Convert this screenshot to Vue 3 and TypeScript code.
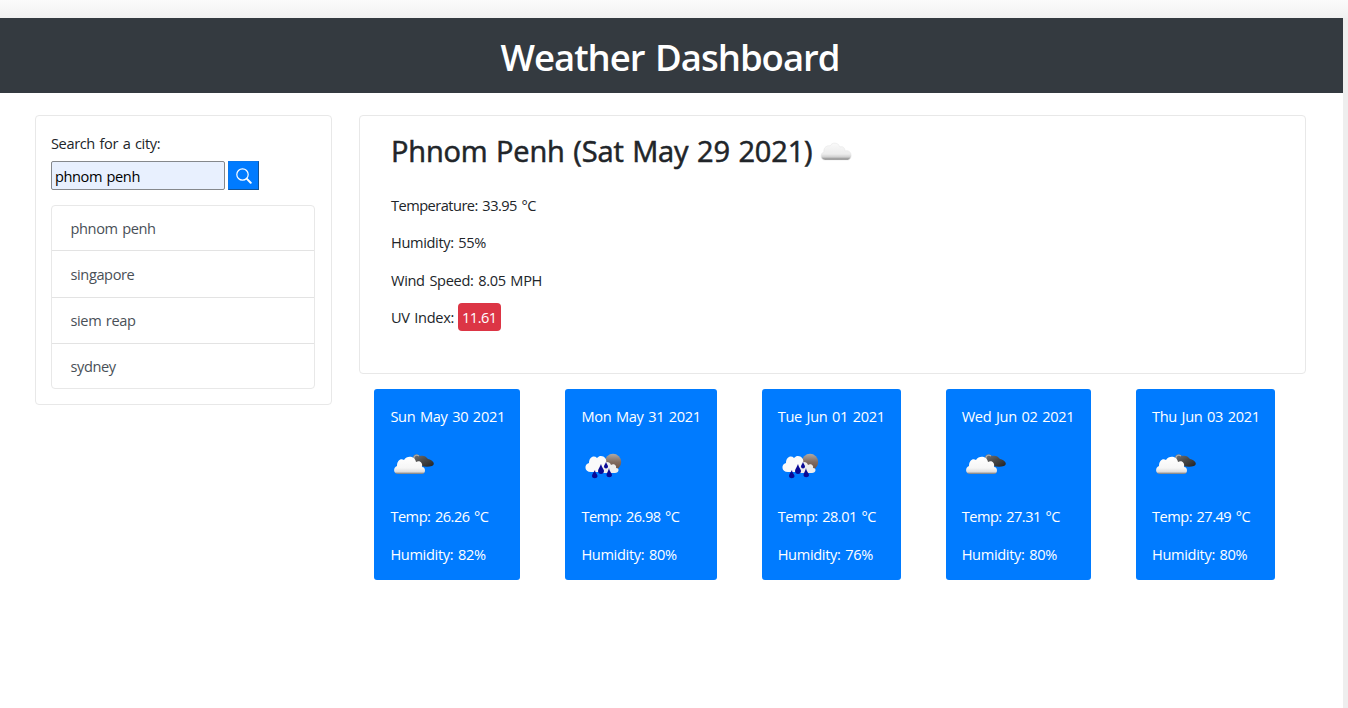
<script setup lang="ts">
interface Forecast {
  date: string
  icon: 'clouds' | 'rain'
  temp: string
  humidity: string
  size: string
}

const cities: string[] = ['phnom penh', 'singapore', 'siem reap', 'sydney']

const details: string[] = ['Temperature: 33.95 °C', 'Humidity: 55%', 'Wind Speed: 8.05 MPH']

const forecasts: Forecast[] = [
  { date: 'Sun May 30 2021', icon: 'clouds', temp: '26.26', humidity: '82', size: 'sun' },
  { date: 'Mon May 31 2021', icon: 'rain', temp: '26.98', humidity: '80', size: 'mon' },
  { date: 'Tue Jun 01 2021', icon: 'rain', temp: '28.01', humidity: '76', size: 'tue' },
  { date: 'Wed Jun 02 2021', icon: 'clouds', temp: '27.31', humidity: '80', size: 'wed' },
  { date: 'Thu Jun 03 2021', icon: 'clouds', temp: '27.49', humidity: '80', size: 'thu' },
]
</script>

<template>
  <div class="page">
    <div class="topbar"></div>
    <div class="view">
      <header class="header"><h1>Weather Dashboard</h1></header>
      <main class="main">
        <aside class="panel search">
          <label class="label" for="city">Search for a city:</label>
          <div class="form">
            <input id="city" class="input" type="text" value="phnom penh" />
            <button class="button" type="button" aria-label="Search">
              <svg width="16" height="16" viewBox="0 0 16 16" fill="none" stroke="#fff" stroke-linecap="round">
                <circle cx="6.5" cy="6.5" r="5.7" stroke-width="1.2" />
                <path d="M10.9 10.9L14.7 14.7" stroke-width="2" />
              </svg>
            </button>
          </div>
          <ul class="list">
            <li v-for="city in cities" :key="city">{{ city }}</li>
          </ul>
        </aside>
        <section class="content">
          <div class="panel current">
            <h2>
              <span>Phnom Penh (Sat May 29 2021)</span>
              <svg class="cloud" width="32" height="20" viewBox="0 0 32 20">
                <defs>
                  <linearGradient id="pale" x1="0" y1="0" x2="0" y2="1">
                    <stop offset="0" stop-color="#fafafa" />
                    <stop offset=".65" stop-color="#ececec" />
                    <stop offset=".82" stop-color="#d0d0d0" />
                    <stop offset="1" stop-color="#777" />
                  </linearGradient>
                </defs>
                <path d="M5 18C0 18 0 11 4 10C3 5 8 3 10 4C12 0 18 0 20 5C23 4 25 6 25 9C32 7 33 17 28 18Z" fill="url(#pale)" stroke="#e6e6e6" stroke-width=".6" />
              </svg>
            </h2>
            <p v-for="line in details" :key="line">{{ line }}</p>
            <p class="uv">UV Index: <span class="badge">11.61</span></p>
          </div>
          <div class="forecast">
            <article v-for="day in forecasts" :key="day.date" class="card" :class="day.size">
              <p class="date">{{ day.date }}</p>
              <svg class="icon" width="47" height="47" viewBox="0 0 47 47">
                <defs>
                  <linearGradient :id="`white-${day.size}`" x1="0" y1="0" x2="0" y2="1">
                    <stop offset="0" stop-color="#fff" />
                    <stop offset=".65" stop-color="#f6f6f6" />
                    <stop offset=".87" stop-color="#ddd" />
                    <stop offset="1" stop-color="#777" />
                  </linearGradient>
                  <linearGradient :id="`dark-${day.size}`" x1="0" y1="0" x2="1" y2="1">
                    <stop offset="0" stop-color="#777" />
                    <stop offset=".5" stop-color="#484848" />
                    <stop offset="1" stop-color="#222" />
                  </linearGradient>
                  <linearGradient :id="`moon-${day.size}`" x1="0" y1="0" x2="0" y2="1">
                    <stop offset="0" stop-color="#b0aaa5" />
                    <stop offset=".5" stop-color="#806b60" />
                    <stop offset="1" stop-color="#685045" />
                  </linearGradient>
                </defs>
                <template v-if="day.icon === 'clouds'">
                  <path d="M23 19C22 14 26 12 30 15C33 14 36 15 38 18C43 19 46 23 42 25C36 27 29 25 25 21Z" :fill="`url(#dark-${day.size})`" />
                  <path d="M24 19C23 15 26 13 29 15" fill="none" stroke="#aaa" stroke-width="1.2" />
                  <path d="M8 33C3 33 3 26 7 25C7 19 11 17 14 19C17 14 25 15 26 21C30 19 33 22 32 26C36 26 36 33 32 33Z" :fill="`url(#white-${day.size})`" />
                </template>
                <template v-else>
                  <circle cx="32" cy="21" r="8.2" :fill="`url(#moon-${day.size})`" />
                  <path d="M10 31C3 31 3 23 8 22C8 16 13 14 16 17C20 12 27 17 25 22C29 22 29 31 23 31Z" fill="#fafafa" />
                  <path d="M22 32C18 30 20 25 23 25C22 20 29 20 30 24C33 22 36 25 35 27C39 27 38 32 34 32Z" fill="#eee" />
                  <g fill="#0a0a96">
                    <path d="M20 23C21 27 23 28 23 30C23 34 17 34 17 30C17 28 19 26 20 23Z" />
                    <path d="M14 29C14 32 16.5 33 16.5 35C16.5 38 11 38 11 35C11 33 13 31 14 29Z" />
                    <path d="M28 27C28 30 31 32 31 34C31 37 25.5 37 25.5 34C25.5 32 27.5 30 28 27Z" />
                    <path d="M25 21C25.5 23 27 24 27 25.5C27 28 23 28 23 25.5C23 24 24.5 23 25 21Z" />
                  </g>
                </template>
              </svg>
              <p>Temp: {{ day.temp }} °C</p>
              <p>Humidity: {{ day.humidity }}%</p>
            </article>
          </div>
        </section>
      </main>
    </div>
  </div>
</template>

<style>
body {
  margin: 0;
  overflow: hidden;
}
</style>

<style scoped>
.page {
  box-sizing: border-box;
  width: 1348px;
  height: 708px;
  overflow: hidden;
  background: #eee;
  color: #212529;
  font: 14.6px/22.5px "Segoe UI", "Open Sans", "Noto Sans", sans-serif;
  letter-spacing: -0.33px;
  word-spacing: 1.2px;
}
.page * {
  box-sizing: border-box;
}
p, h1, h2, ul {
  margin: 0;
}
.topbar {
  height: 18px;
  background: linear-gradient(#fbfbfb, #f1f1f1);
}
.view {
  width: 1343px;
  height: 690px;
  background: #fff;
}
.header {
  height: 75px;
  padding-top: 16px;
  background: #343a40;
  color: #fff;
  text-align: center;
}
h1 {
  padding-right: 3px;
  font-size: 36.5px;
  font-weight: 600;
  line-height: 46px;
  letter-spacing: -1px;
  word-spacing: 2px;
}
.main {
  display: flex;
  align-items: flex-start;
  gap: 27px;
  padding: 22px 0 0 35px;
}
.panel {
  border: 1px solid #e8e8e8;
  border-radius: 4px;
}
.search {
  width: 297px;
  height: 290px;
  padding: 16px 16px 0 15px;
}
.label {
  display: block;
  height: 29px;
  letter-spacing: -0.38px;
}
.form {
  display: flex;
  gap: 3px;
  height: 29px;
}
.input {
  width: 174px;
  height: 29px;
  padding: 1px 3px 0;
  border: 1px solid #85888c;
  border-radius: 2px;
  background: #e8f0fe;
  color: #000;
  font: inherit;
  letter-spacing: -0.42px;
  word-spacing: inherit;
}
.button {
  display: flex;
  align-items: center;
  justify-content: center;
  width: 31px;
  height: 29px;
  padding: 1px 0 0;
  border: 1px solid;
  border-color: #0877ed #125499 #125499 #0877ed;
  background: #007bff;
}
.list {
  height: 184px;
  margin-top: 15px;
  padding: 0;
  border: 1px solid #e8e8e8;
  border-radius: 4px;
  color: #495057;
  letter-spacing: -0.4px;
  list-style: none;
}
li {
  height: 46px;
  padding: 11px 18.5px 0;
  border-bottom: 1px solid #e3e3e3;
}
li:first-child {
  height: 45px;
}
li:nth-child(2) {
  height: 47px;
  padding-top: 12px;
}
li:last-child {
  height: 44px;
  border-bottom: 0;
}
.content {
  width: 947px;
}
.current {
  height: 259px;
  padding: 16px 31px 0;
}
h2 {
  display: flex;
  align-items: center;
  gap: 8px;
  height: 38px;
  margin-bottom: 24px;
  font-size: 29px;
  font-weight: 400;
  letter-spacing: -0.16px;
  line-height: 38px;
  white-space: nowrap;
  -webkit-text-stroke: 0.55px #212529;
}
.cloud {
  margin-top: 1px;
}
.current p {
  height: 22.5px;
  margin-bottom: 15px;
}
.current p:nth-of-type(1) {
  margin-bottom: 14.4px;
  letter-spacing: -0.52px;
}
.current p:nth-of-type(2) {
  margin-bottom: 15.6px;
  letter-spacing: -0.35px;
}
.current p:nth-of-type(3) {
  margin-bottom: 14.4px;
}
.uv {
  display: flex;
  gap: 4px;
}
.badge {
  height: 28px;
  margin-top: -3px;
  padding: 3px 4px 0;
  border-radius: 4px;
  background: #dc3545;
  color: #fff;
  letter-spacing: -0.5px;
}
.forecast {
  display: flex;
  gap: 45px;
  margin-top: 15px;
  padding-left: 15.4px;
}
.card {
  flex: none;
  height: 191px;
  padding: 16px 0 0 16px;
  border-radius: 3px;
  background: #007bff;
  color: #fff;
  white-space: nowrap;
}
.card p {
  height: 22.5px;
  margin-bottom: 15px;
}
.card .date {
  margin-bottom: 13px;
}
.card .icon + p {
  margin-bottom: 16px;
  letter-spacing: -0.5px;
}
.icon {
  display: block;
  margin-bottom: 17px;
}
.sun { width: 146px; }
.mon { width: 151.3px; }
.tue { width: 139px; }
.wed { width: 145.3px; }
.thu { width: 139.5px; }
</style>
